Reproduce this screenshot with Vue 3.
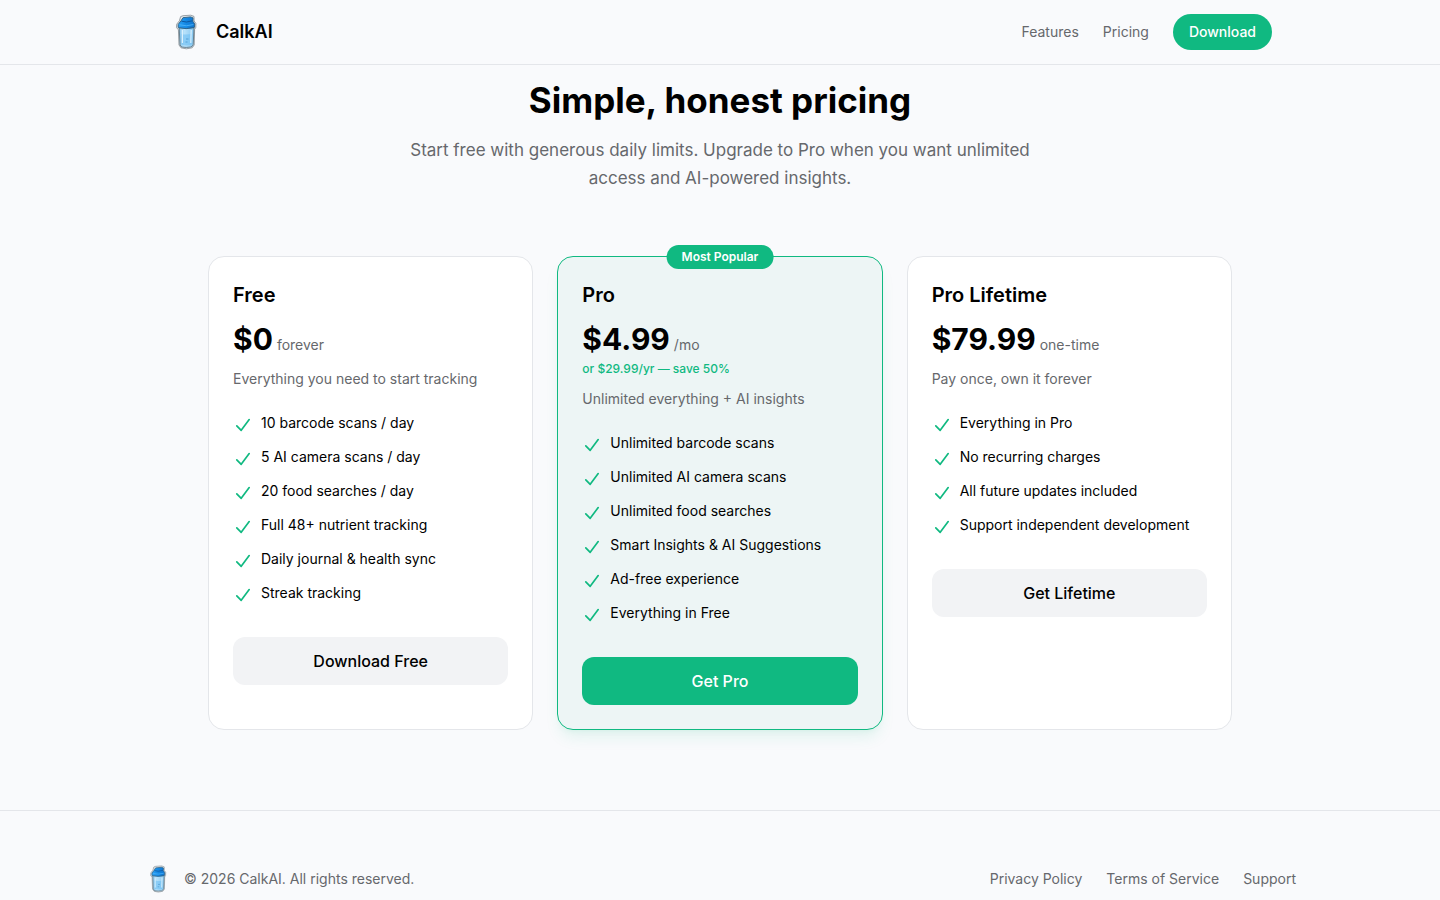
<script setup>
const plans = [
  {
    name: 'Free',
    price: '$0',
    period: 'forever',
    blurb: 'Everything you need to start tracking',
    features: [
      '10 barcode scans / day',
      '5 AI camera scans / day',
      '20 food searches / day',
      'Full 48+ nutrient tracking',
      'Daily journal & health sync',
      'Streak tracking'
    ],
    action: 'Download Free'
  },
  {
    name: 'Pro',
    price: '$4.99',
    period: '/mo',
    note: 'or $29.99/yr — save 50%',
    badge: 'Most Popular',
    blurb: 'Unlimited everything + AI insights',
    features: [
      'Unlimited barcode scans',
      'Unlimited AI camera scans',
      'Unlimited food searches',
      'Smart Insights & AI Suggestions',
      'Ad-free experience',
      'Everything in Free'
    ],
    action: 'Get Pro'
  },
  {
    name: 'Pro Lifetime',
    price: '$79.99',
    period: 'one-time',
    blurb: 'Pay once, own it forever',
    features: [
      'Everything in Pro',
      'No recurring charges',
      'All future updates included',
      'Support independent development'
    ],
    action: 'Get Lifetime'
  }
]
</script>

<template>
  <svg class="defs" aria-hidden="true">
    <defs>
      <linearGradient id="cup-body" x1="0" y1="0" x2="1" y2="0">
        <stop offset="0" stop-color="#86c3ea" />
        <stop offset="0.35" stop-color="#b8e2fb" />
        <stop offset="1" stop-color="#86c6ef" />
      </linearGradient>
      <linearGradient id="cup-lid" x1="0" y1="0" x2="1" y2="0">
        <stop offset="0" stop-color="#2aa0f4" />
        <stop offset="0.5" stop-color="#1388e4" />
        <stop offset="1" stop-color="#1173cb" />
      </linearGradient>
      <symbol id="shaker" viewBox="0 0 36 36">
        <path d="M12.6 2.6 15 1.7 22.8 1.2 26 2.4 26.1 7 27.9 9.4 27.8 13.4 26.6 15.4 26.2 31 24.2 33.8 18.4 34.8 13 33.8 11 31 10.4 15.8 8.5 13.6 8.7 10.2 11.4 6.8Z" fill="#dfe5e9" stroke="#858d93" stroke-width="0.8" stroke-linejoin="round" />
        <path d="M11.2 13.8H26L25.2 30.6Q24.8 32.6 22.4 33.1Q18.2 33.8 14.2 33.1Q12.3 32.6 12 30.6Z" fill="url(#cup-body)" stroke="#5d7787" stroke-width="0.9" />
        <path d="M13.3 20Q18 21.3 24.2 19.8L23.7 30.6Q18 32.5 13.6 30.6Z" fill="#70bff3" opacity="0.6" />
        <path d="M14.4 16V29M23.2 16 22.8 29" stroke="#dcf1fd" stroke-width="1.2" />
        <path d="M18 25H20.5M17.5 28H19.5" stroke="#4b98cf" stroke-width="0.8" />
        <path d="M13 6.8 15 3.7 22.6 2.9 25 3.9 24.9 7.2 26.7 10 26.4 13.4Q18 15.8 10.2 13.6L10.2 10.4Z" fill="url(#cup-lid)" stroke="#2c5f80" stroke-width="0.9" stroke-linejoin="round" />
        <path d="M13.5 7.2Q18 9 24.4 6.8" fill="none" stroke="#0d58a2" stroke-width="1" />
        <path d="M11.6 10.8Q18 12.8 25.4 10.6" fill="none" stroke="#4ab3fb" stroke-width="0.9" />
      </symbol>
    </defs>
  </svg>

  <header class="site-header">
    <div class="header-inner">
      <a class="brand" href="#">
        <svg class="brand-logo" aria-hidden="true"><use href="#shaker" /></svg>
        <span>CalkAI</span>
      </a>
      <nav class="nav">
        <a href="#features">Features</a>
        <a href="#pricing">Pricing</a>
        <a class="download" href="#download">Download</a>
      </nav>
    </div>
  </header>

  <main id="pricing" class="pricing">
    <div class="intro">
      <h2>Simple, honest pricing</h2>
      <p>Start free with generous daily limits. Upgrade to Pro when you want unlimited access and AI-powered insights.</p>
    </div>

    <div class="plans">
      <article v-for="plan in plans" :key="plan.name" class="plan" :class="{ featured: plan.badge }">
        <span v-if="plan.badge" class="badge">{{ plan.badge }}</span>
        <h3>{{ plan.name }}</h3>
        <div class="price">
          <span class="amount">{{ plan.price }}</span>
          <span class="period">{{ plan.period }}</span>
        </div>
        <p v-if="plan.note" class="note">{{ plan.note }}</p>
        <p class="blurb">{{ plan.blurb }}</p>
        <ul>
          <li v-for="feature in plan.features" :key="feature">
            <svg class="check" viewBox="0 0 20 20" aria-hidden="true">
              <path d="M3.8 10.8 8.2 15.3 16.2 4.6" />
            </svg>
            <span>{{ feature }}</span>
          </li>
        </ul>
        <button type="button" class="action">{{ plan.action }}</button>
      </article>
    </div>
  </main>

  <footer class="site-footer">
    <div class="footer-inner">
      <div class="copyright">
        <svg class="footer-logo" aria-hidden="true"><use href="#shaker" /></svg>
        <span>© 2026 CalkAI. All rights reserved.</span>
      </div>
      <nav class="footer-links">
        <a href="#privacy">Privacy Policy</a>
        <a href="#terms">Terms of Service</a>
        <a href="#support">Support</a>
      </nav>
    </div>
  </footer>
</template>

<style>
body {
  margin: 0;
  background: #f9fafc;
  color: #000;
  font-family: Inter, "Liberation Sans", sans-serif;
  font-size: 14px;
  line-height: 20px;
}
</style>

<style scoped>
.defs {
  position: absolute;
  width: 0;
  height: 0;
}

a {
  color: inherit;
  text-decoration: none;
}

h2,
h3,
p,
ul {
  margin: 0;
  padding: 0;
}

.site-header {
  position: sticky;
  top: 0;
  z-index: 10;
  background: #f9fafc;
  border-bottom: 1px solid #e4e6ea;
}

.header-inner {
  box-sizing: border-box;
  display: flex;
  align-items: center;
  justify-content: space-between;
  max-width: 1152px;
  height: 64px;
  margin: 0 auto;
  padding: 0 24px;
}

.brand {
  display: flex;
  align-items: center;
  gap: 12px;
  font-size: 18px;
  font-weight: 600;
  line-height: 28px;
}

.brand-logo {
  width: 36px;
  height: 36px;
}

.nav {
  display: flex;
  align-items: center;
  gap: 24px;
  color: #66686c;
}

.nav .download {
  padding: 8px 16px;
  border-radius: 18px;
  background: #10b981;
  color: #fff;
  font-weight: 500;
}

.pricing {
  padding: 15px 24px 80px;
}

.intro {
  max-width: 640px;
  margin: 0 auto 64px;
  text-align: center;
}

.intro h2 {
  font-size: 35px;
  font-weight: 700;
  line-height: 40px;
}

.intro p {
  margin-top: 16px;
  color: #66686c;
  font-size: 17px;
  line-height: 28px;
}

.plans {
  display: grid;
  grid-template-columns: repeat(3, minmax(0, 1fr));
  gap: 24px;
  max-width: 1024px;
  margin: 0 auto;
}

.plan {
  position: relative;
  padding: 24px;
  border: 1px solid #e4e6ea;
  border-radius: 16px;
  background: #fff;
}

.featured {
  border-color: #10b981;
  background: #edf5f5;
  box-shadow: 0 10px 15px -3px rgba(16, 185, 129, 0.1), 0 4px 6px -4px rgba(16, 185, 129, 0.1);
}

.badge {
  position: absolute;
  top: -12px;
  left: 50%;
  padding: 4px 15px;
  border-radius: 12px;
  background: #10b981;
  color: #fff;
  font-size: 12px;
  font-weight: 600;
  line-height: 16px;
  white-space: nowrap;
  transform: translateX(-50%);
}

.plan h3 {
  font-size: 20px;
  font-weight: 600;
  line-height: 28px;
}

.price {
  display: flex;
  align-items: baseline;
  gap: 4px;
  margin-top: 12px;
  line-height: 36px;
}

.amount {
  font-size: 30px;
  font-weight: 700;
}

.period {
  color: #66686c;
  line-height: 20px;
}

.note {
  margin-top: 4px;
  color: #10b981;
  font-size: 12px;
  font-weight: 500;
  line-height: 16px;
}

.blurb {
  margin-top: 12px;
  color: #66686c;
}

.plan ul {
  display: grid;
  gap: 12px;
  margin: 24px 0 32px;
  list-style: none;
}

.plan li {
  display: flex;
  align-items: flex-start;
  gap: 8px;
}

.check {
  flex: none;
  width: 20px;
  height: 20px;
  margin-top: 2px;
  fill: none;
  stroke: #10b981;
  stroke-width: 1.7;
  stroke-linecap: round;
  stroke-linejoin: round;
}

.action {
  width: 100%;
  height: 48px;
  border: 0;
  border-radius: 12px;
  background: #f2f3f5;
  color: #000;
  font-family: inherit;
  font-size: 16px;
  font-weight: 500;
  line-height: 24px;
  cursor: pointer;
}

.featured .action {
  background: #10b981;
  color: #fff;
}

.site-footer {
  padding: 48px 24px 0;
  border-top: 1px solid #e4e6ea;
  color: #66686c;
}

.footer-inner {
  display: flex;
  align-items: center;
  justify-content: space-between;
  max-width: 1152px;
  min-height: 40px;
  margin: 0 auto;
}

.copyright {
  display: flex;
  align-items: center;
  gap: 12px;
}

.footer-logo {
  width: 28px;
  height: 28px;
}

.footer-links {
  display: flex;
  gap: 24px;
}
</style>
